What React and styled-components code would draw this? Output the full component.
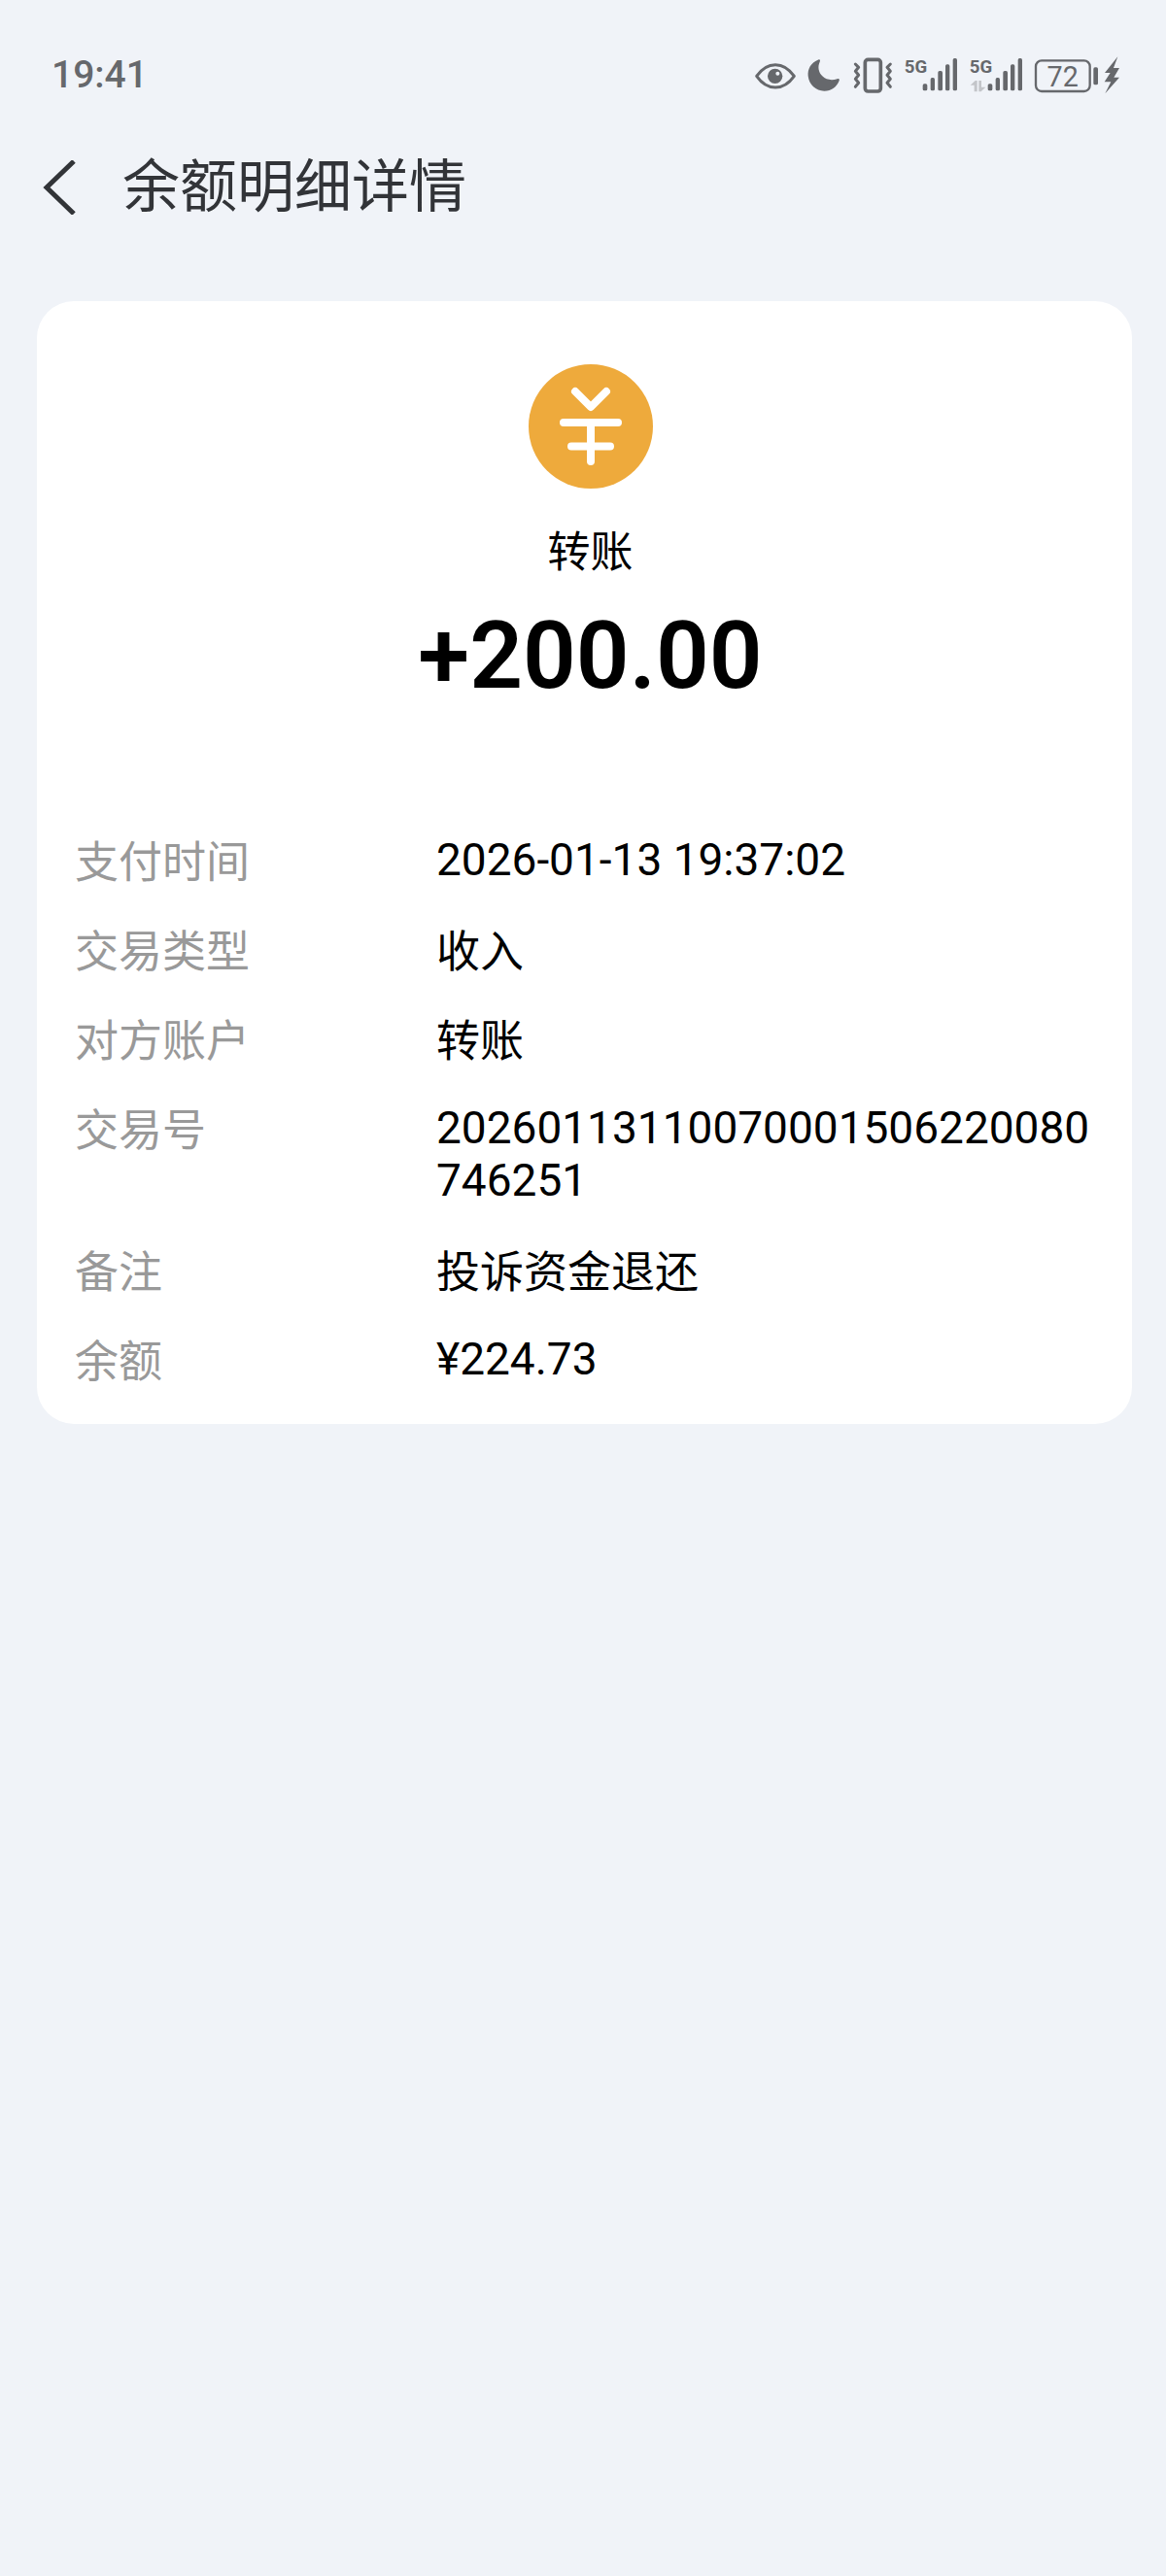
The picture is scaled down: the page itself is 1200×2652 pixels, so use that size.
import styled, { createGlobalStyle } from 'styled-components';

const GlobalStyle = createGlobalStyle`
    * {
        box-sizing: border-box;
    }

    body {
        margin: 0;
        background-color: #f0f3f8;
        font-family: Roboto, 'Noto Sans CJK SC', sans-serif;
        color: #000;
    }
`

const StylePage = styled.div`
    min-height: 100vh;
    background-color: #f0f3f8;
`

const StyleStatusBar = styled.div`
    display: flex;
    align-items: center;
    justify-content: space-between;
    padding: 57px 48px 0 53px;
    color: #66686c;
`

const StyleClock = styled.time`
    font-size: 39px;
    font-weight: 500;
    line-height: 40px;
`

const StyleStatusIcons = styled.div`
    display: flex;
    align-items: center;
    gap: 12px;
`

const StyleStatusIcon = styled.svg`
    display: block;
    height: 40px;
    width: ${props => props.$width}px;
    overflow: visible;
    font-family: Roboto, sans-serif;
`

const StyleHeader = styled.header`
    display: flex;
    align-items: center;
    gap: 48px;
    padding: 56px 44px 0;
    color: #323438;
`

const StyleBack = styled.button`
    display: flex;
    padding: 0;
    border: unset;
    background-color: unset;
    color: inherit;
    cursor: pointer;
`

const StyleTitle = styled.h1`
    margin: 0;
    font-size: 59px;
    font-weight: 400;
    line-height: 80px;
`

const StyleCard = styled.main`
    margin: 77px 35px 0 38px;
    padding: 65px 27px 40px 39px;
    border-radius: 38px;
    background-color: #fff;
`

const StyleSummary = styled.section`
    display: flex;
    flex-direction: column;
    align-items: center;
`

const StyleKind = styled.h2`
    margin: 35px 0 33px;
    font-family: 'Noto Sans CJK SC', sans-serif;
    font-size: 44px;
    font-weight: 400;
    line-height: 54px;
`

const StyleAmount = styled.p`
    margin: 0;
    font-size: 96px;
    font-weight: 600;
    line-height: 100px;
`

const StyleDetails = styled.dl`
    display: flex;
    flex-direction: column;
    gap: 38px;
    margin: 133px 0 0;
`

const StyleRow = styled.div`
    display: grid;
    grid-template-columns: 372px 1fr;
    line-height: 54px;
`

const StyleLabel = styled.dt`
    font-family: 'Noto Sans CJK SC', sans-serif;
    font-size: 45px;
    color: #999;
`

const StyleValue = styled.dd`
    margin: 0;
    min-width: 0;
    font-family: ${props => props.$numeric ? 'Roboto' : "'Noto Sans CJK SC'"}, sans-serif;
    font-size: ${props => props.$numeric ? '46px' : '45px'};
    overflow-wrap: anywhere;
`

const details = [
    { label: '支付时间', value: '2026-01-13 19:37:02', numeric: true },
    { label: '交易类型', value: '收入' },
    { label: '对方账户', value: '转账' },
    { label: '交易号', value: '20260113110070001506220080746251', numeric: true },
    { label: '备注', value: '投诉资金退还' },
    { label: '余额', value: '¥224.73', numeric: true },
]

function EyeIcon () {
    return(
        <StyleStatusIcon $width={42} viewBox="0 0 126 120" fill="none">
            <path d="M5 64C22 40 41 29 63 29s41 11 58 35C104 88 85 99 63 99S22 88 5 64Z" stroke="currentColor" strokeWidth="9" strokeLinejoin="round" />
            <circle cx="62" cy="64" r="23" fill="currentColor" />
            <circle cx="70" cy="56" r="6" fill="#f0f3f8" />
        </StyleStatusIcon>
    )
}

function MoonIcon () {
    return(
        <StyleStatusIcon $width={35} viewBox="0 0 105 120" fill="currentColor">
            <path d="M35 13C10 23 0 43 2 64c3 27 24 46 50 46 22 0 39-13 46-32 2-5-2-7-6-5-17 5-35 3-46-9C34 52 31 35 38 20c2-4 1-8-3-7Z" />
        </StyleStatusIcon>
    )
}

function VibrateIcon () {
    return(
        <StyleStatusIcon $width={41} viewBox="0 0 123 120" fill="none" stroke="currentColor">
            <rect x="37" y="13" width="48" height="98" rx="9" strokeWidth="11" />
            <path d="M7 27l10 10-10 12 10 12-10 12 10 12-10 12M115 27l-10 10 10 12-10 12 10 12-10 12 10 12" strokeWidth="9" strokeLinecap="round" strokeLinejoin="round" />
        </StyleStatusIcon>
    )
}

function SignalIcon ({ traffic }) {
    return(
        <StyleStatusIcon $width={55} viewBox="0 0 165 120" fill="currentColor">
            <text x="-1" y="55" fontSize="56" fontWeight="700">5G</text>
            {traffic && (
                <path d="M2 92l15-14h6v34h-9V92H2ZM28 78h8v20h13l-14 14h-7V78Z" fill="#c3c5c9" />
            )}
            <rect x="56" y="88" width="14" height="21" rx="5" />
            <rect x="80" y="69" width="13" height="40" rx="5" />
            <rect x="103" y="48" width="14" height="61" rx="5" />
            <rect x="126" y="28" width="13" height="81" rx="5" />
            <rect x="149" y="9" width="13" height="100" rx="5" />
        </StyleStatusIcon>
    )
}

function BatteryIcon ({ level }) {
    return(
        <StyleStatusIcon $width={87} viewBox="0 0 261 120" fill="currentColor">
            <rect x="3" y="16" width="167" height="95" rx="18" fill="none" stroke="currentColor" strokeWidth="7" />
            <text x="86" y="96" fontSize="86" textAnchor="middle">{level}</text>
            <rect x="181" y="37" width="14" height="54" rx="5" />
            <path d="M256 4l-40 50h17l-18 28h20l-18 36 44-50h-17l17-29h-18l13-35Z" />
        </StyleStatusIcon>
    )
}

function YuanIcon () {
    return(
        <svg width="128" height="128" viewBox="0 0 128 128" fill="none">
            <circle cx="64" cy="64" r="64" fill="#eeaa3c" />
            <path d="M48 28l16 16 16-16M36 60h56M44 84.500h40M64 60v40" stroke="#fff" strokeWidth="8" strokeLinecap="round" strokeLinejoin="round" />
        </svg>
    )
}

export default function App () {
    return(
        <>
            <GlobalStyle />
            <StylePage lang="zh-CN">
                <StyleStatusBar>
                    <StyleClock>19:41</StyleClock>
                    <StyleStatusIcons>
                        <EyeIcon />
                        <MoonIcon />
                        <VibrateIcon />
                        <SignalIcon />
                        <SignalIcon traffic />
                        <BatteryIcon level={72} />
                    </StyleStatusIcons>
                </StyleStatusBar>
                <StyleHeader>
                    <StyleBack type="button" aria-label="返回">
                        <svg width="34" height="56" viewBox="0 0 34 56" fill="none" stroke="currentColor" strokeWidth="5">
                            <path d="M32 1L4 28l28 27" />
                        </svg>
                    </StyleBack>
                    <StyleTitle>余额明细详情</StyleTitle>
                </StyleHeader>
                <StyleCard>
                    <StyleSummary>
                        <YuanIcon />
                        <StyleKind>转账</StyleKind>
                        <StyleAmount>+200.00</StyleAmount>
                    </StyleSummary>
                    <StyleDetails>
                        {details.map(item => (
                            <StyleRow key={item.label}>
                                <StyleLabel>{item.label}</StyleLabel>
                                <StyleValue $numeric={item.numeric}>{item.value}</StyleValue>
                            </StyleRow>
                        ))}
                    </StyleDetails>
                </StyleCard>
            </StylePage>
        </>
    )
}
